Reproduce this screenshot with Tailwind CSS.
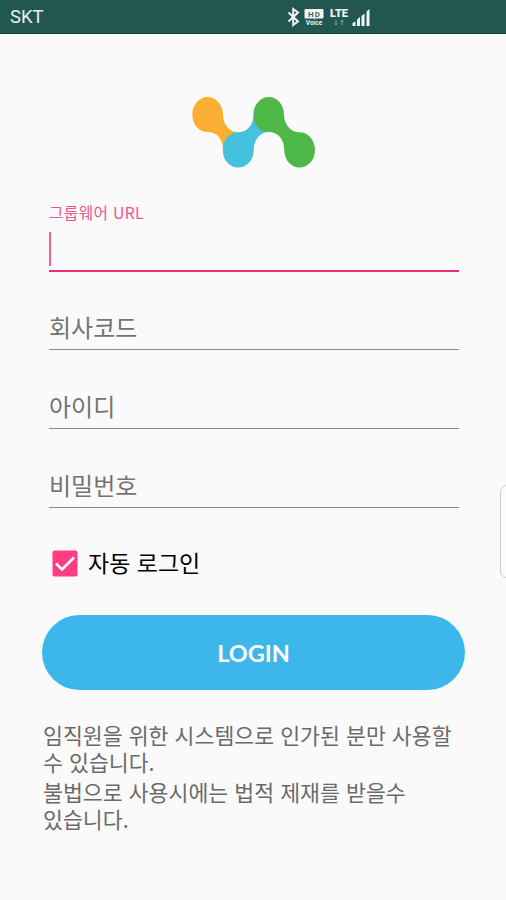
<!DOCTYPE html>
<html lang="ko">
<head>
<meta charset="utf-8">
<title>Login</title>
<script src="https://cdn.jsdelivr.net/npm/@tailwindcss/browser@4"></script>
</head>
<body class="relative flex h-[900px] w-[506px] flex-col overflow-hidden bg-[#fafafa] font-['Noto_Sans_CJK_KR',sans-serif]">
  <header class="flex h-[34px] w-full shrink-0 items-center border-b border-[#123f3a] bg-[#225751] text-white">
    <span class="ml-[10px] w-[276px] font-[Roboto,sans-serif] text-[18.500px] leading-[34px] text-[#e8f0ef]">SKT</span>
    <svg class="h-[34px] w-[90px]" viewBox="286 0 90 34" fill="none">
      <path d="M288.500 12.500L298 21.500L293.200 25V9L298 12.500L288.500 21.500" stroke="#f1f6f5" stroke-width="2"/>
      <rect x="304.500" y="9" width="19" height="9.500" rx="1" fill="#f1f6f5"/>
      <text x="314.500" y="16.600" text-anchor="middle" font-family="Roboto, sans-serif" font-size="8" font-weight="700" letter-spacing="1" fill="#3c6b66">HD</text>
      <text x="314" y="24.800" text-anchor="middle" font-family="Roboto, sans-serif" font-size="6.500" font-weight="700" fill="#e8f0ef">Voice</text>
      <text x="339" y="17.300" text-anchor="middle" font-family="Roboto, sans-serif" font-size="11" font-weight="900" fill="#f1f6f5">LTE</text>
      <path d="M336 20v5M334.500 23.500l1.500 1.500 1.500-1.500M342 25v-5M340.500 21.500l1.500-1.500 1.500 1.500" stroke="#7fa19d"/>
      <path d="M352.500 26v-3l3-1.500V26zM357 26v-6.500l3-2.500v9zM361.500 26V16l3-2.500V26zM366.500 26V11.500l3-2.500v17z" fill="#f1f6f5"/>
    </svg>
  </header>

  <main class="flex flex-col">
    <svg class="ml-[190px] mt-[61px] h-[75px] w-[127px]" viewBox="190 95 127 75">
      <path fill="#fbae31" d="M207.500 97C216 97 223 105 223 114.500C223 125 230 132.300 238 132.300L232 150H223C223 140 218 132 207.500 132C199 132 192.300 124.500 192.300 114.500C192.300 105 199 97 207.500 97Z"/>
      <path fill="#45c1dd" d="M238.200 132.300C247 132.300 253.500 125 253.500 114.500L269 117V132C260 132 253.700 140 253.700 150C253.700 160 247 167.500 238.200 167.500C229.500 167.500 222.800 160 222.800 150C222.800 140 229.500 132.300 238.200 132.300Z"/>
      <path fill="#4db748" d="M268.800 97C277.500 97 284 105 284 114.500C284 125 291 132.300 299.500 132.300C308 132.300 315 140 315 150C315 160 308 167.500 299.500 167.500C291 167.500 284.300 160 284.300 150C284.300 140 278.500 132 268.800 132C260 132 253.500 124.500 253.500 114.500C253.500 105 260 97 268.800 97Z"/>
    </svg>

    <form class="ml-[49px] flex w-[410px] flex-col text-[#737373]">
      <div class="flex h-[102px] flex-col border-b-[2px] border-[#ec2c7c] pt-[31px]">
        <label class="h-[24px] text-[15.800px] leading-[23px] tracking-[0.3px] text-[#f5538f]">그룹웨어 URL</label>
        <div class="mt-[7px] h-[34px] w-[2px] bg-[#f85a95]"></div>
      </div>
      <div class="flex h-[78px] items-end border-b border-[#888] pb-[4px] text-[24px] leading-[36px]">회사코드</div>
      <div class="flex h-[79px] items-end border-b border-[#888] pb-[4px] text-[24px] leading-[36px]">아이디</div>
      <div class="flex h-[79px] items-end border-b border-[#888] pb-[4px] text-[24px] leading-[36px]">비밀번호</div>
      <label class="mt-[37px] flex h-[36px] items-center pl-[3px] text-[23px] leading-[36px] text-black">
        <svg class="h-[27px] w-[26px]" viewBox="0 0 26 27" fill="none">
          <rect x=".5" y=".5" width="25" height="26" rx="2" fill="#ff3d82"/>
          <path d="M4 13.500l6 6L22 7.500" stroke="white" stroke-width="2.600"/>
        </svg>
        <span class="relative -top-px ml-[10px]">자동 로그인</span>
      </label>
    </form>

    <button class="ml-[42px] mt-[34px] flex h-[75px] w-[423px] items-center justify-center rounded-full bg-[#3db7eb] pt-[2px] font-[Lato,sans-serif] text-[23.500px] font-bold text-white">LOGIN</button>

    <div class="ml-[43px] mt-[31px] w-[440px] whitespace-nowrap text-[21.650px] leading-[27px] text-[#6a6a6a]">
      <p>임직원을 위한 시스템으로 인가된 분만 사용할<br>수 있습니다.</p>
      <p class="mt-[3px]">불법으로 사용시에는 법적 제재를 받을수<br>있습니다.</p>
    </div>
  </main>

  <div class="absolute left-[500px] top-[485px] h-[93px] w-[20px] rounded-[7px] border border-[#c9c9c9] bg-[#fcfcfc]"></div>
</body>
</html>
